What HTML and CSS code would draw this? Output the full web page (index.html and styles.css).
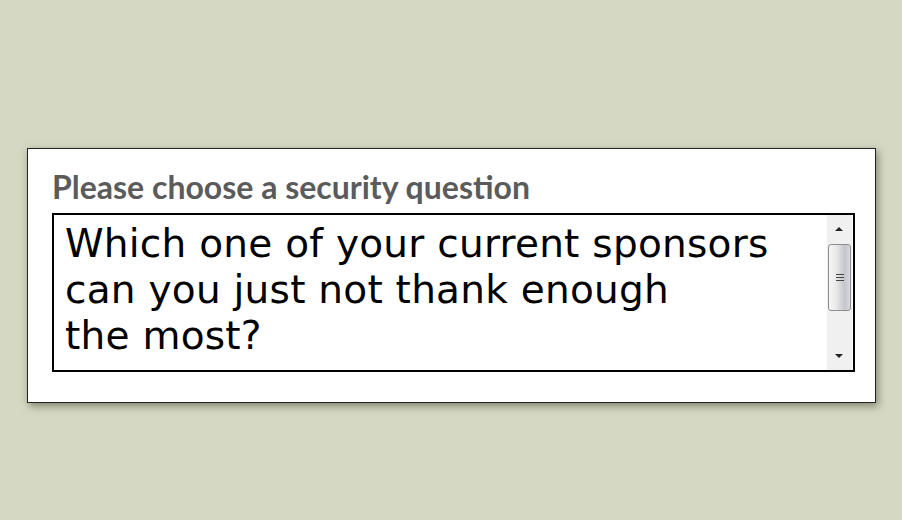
FILE: index.html
```html
<!DOCTYPE html>
<html lang="en">
<head>
  <meta charset="UTF-8">
  <title>Security question</title>
  <link rel="stylesheet" href="styles.css">
</head>
<body>
<div class="card">
  <div class="label">Please choose a security question</div>
  <div class="box">
    <div class="text">Which one of your current sponsors<br>can you just not thank enough<br>the most?</div>
    <div class="scroll">
      <div class="arrow up"></div>
      <div class="thumb"><span></span><span></span><span></span></div>
      <div class="rest"></div>
      <div class="arrow down"></div>
    </div>
  </div>
</div>
</body>
</html>
```

FILE: styles.css
```css
*{
  margin: 0;
  padding: 0;
  box-sizing: border-box;
}
body{
  width: 902px;
  height: 520px;
  background: #d5d8c3;
  padding: 148px 0 0 27px;
  overflow: hidden;
}
.card{
  width: 849px;
  height: 255px;
  background: #fff;
  border: 1px solid #222;
  box-shadow: 2px 3px 8px rgba(60,60,40,.55);
  padding: 20px 20px 0 24px;
}
.label{
  font-family: Lato, "Open Sans", sans-serif;
  font-weight: 700;
  font-size: 32px;
  line-height: 36px;
  color: #5b5b5b;
  margin-bottom: 8px;
}
.box{
  width: 803px;
  height: 159px;
  border: 2px solid #000;
  display: flex;
  padding: 0 1px 0 0;
}
.text{
  flex: 1;
  font-family: "DejaVu Sans", Verdana, sans-serif;
  font-size: 39px;
  line-height: 46px;
  letter-spacing: 0.25px;
  color: #000;
  padding: 6px 0 0 11px;
}
.scroll{
  width: 25px;
  background: #f0f0f0;
  display: flex;
  flex-direction: column;
  align-items: center;
}
.arrow{
  height: 29px;
  width: 100%;
  position: relative;
}
.arrow::after{
  content: "";
  position: absolute;
  left: 8px;
  top: 12px;
  border-left: 4px solid transparent;
  border-right: 4px solid transparent;
}
.up::after{
  border-bottom: 4px solid #222;
}
.down::after{
  top: 13px;
  border-top: 4px solid #222;
}
.thumb{
  width: 23px;
  height: 67px;
  border: 1px solid #8d8d8d;
  border-radius: 3px;
  background: linear-gradient(to right, #f6f6f6 0%, #e8e8e8 35%, #c4c4cc 75%, #d8d8de 100%);
  display: flex;
  flex-direction: column;
  align-items: center;
  justify-content: center;
  gap: 2px;
}
.thumb span{
  width: 8px;
  height: 1px;
  background: #444;
}
.rest{
  flex: 1;
}
```
